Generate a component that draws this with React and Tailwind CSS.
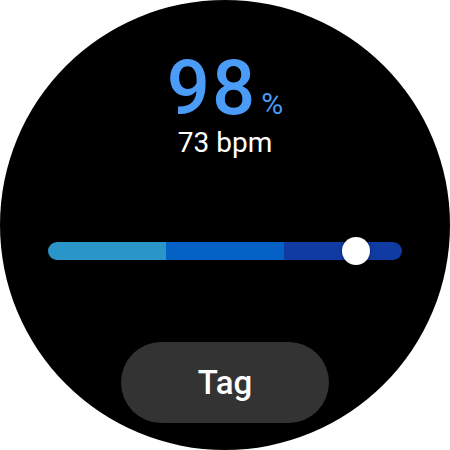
import React from "react";

const SEGMENTS = ["bg-[#2a95c9]", "bg-[#0461c6]", "bg-[#0f3ba3]"];

const App = () => {
  return (
    <div className="w-[450px] h-[450px] bg-white font-['Roboto',sans-serif]">
      {/* Watch face */}
      <div className="w-full h-full rounded-full bg-black flex flex-col items-center">
        {/* SpO2 reading */}
        <div className="flex items-baseline justify-center pt-[50px] h-[126px] text-[#4a9cf6]">
          <span className="text-[76px] leading-[76px] font-medium tracking-[2px]">98</span>
          <span className="text-[30px] leading-[30px] ml-[4px]">%</span>
        </div>
        <div className="mt-[3px] text-[28px] leading-[28px] text-white">73 bpm</div>

        {/* Range bar */}
        <div className="relative mt-[85px] w-[354px] h-[18px]">
          <div className="flex w-full h-full rounded-full overflow-hidden">
            {SEGMENTS.map((c) => (
              <div key={c} className={`flex-1 h-full ${c}`} />
            ))}
          </div>
          <div className="absolute left-[294px] top-1/2 -translate-y-1/2 w-[28px] h-[28px] rounded-full bg-white shadow-[0_1px_3px_rgba(0,0,0,0.5)]" />
        </div>

        {/* Button */}
        <button className="mt-[82px] w-[208px] h-[81px] rounded-full bg-[#333333] text-white text-[33px] font-medium flex items-center justify-center">
          Tag
        </button>
      </div>
    </div>
  );
};

export default App;
